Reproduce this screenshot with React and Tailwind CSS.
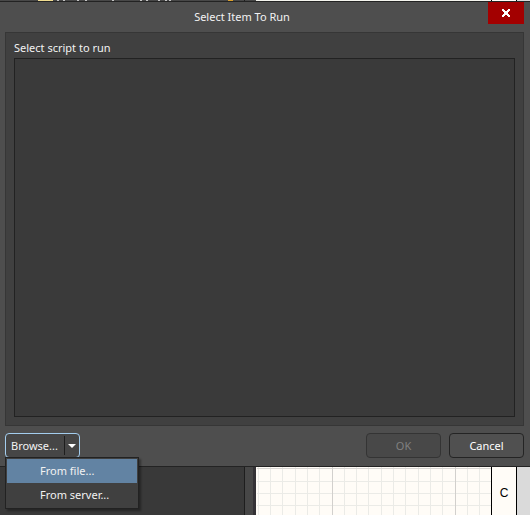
import { useState } from "react";

const columns = [2, 14, 26, 39, 51, 63, 88, 100, 112, 125, 137, 149, 162, 174, 186, 211, 223];
const glyphEdges = [57, 63, 77, 85, 112, 140, 146, 158, 165, 169];

function EditorTop() {
  return (
    <div className="flex h-px shrink-0 bg-[#484848]" aria-hidden="true">
      <svg className="h-px w-[256px]" viewBox="0 0 256 1" shapeRendering="crispEdges">
        <rect x="38" y="0" width="15" height="1" fill="#f0dc90" />
        {glyphEdges.map((x) => (
          <rect key={x} x={x} y="0" width="2" height="1" fill="#c4c4c4" />
        ))}
        <rect x="228" y="0" width="5" height="1" fill="#dca02c" />
        <rect x="244" y="0" width="1" height="1" fill="#1e1e1e" />
      </svg>
      <div className="flex-1 bg-[#f4f4ee]" />
      <div className="w-[26px] border-x border-black bg-[#fffcf7]" />
      <div className="w-[13px] bg-[#dadada]" />
    </div>
  );
}

function EditorBottom() {
  return (
    <div className="flex h-12 shrink-0" aria-hidden="true">
      <div className="w-[244px] bg-[#393939]" />
      <div className="w-[9px] border-l border-[#1e1e1e] bg-[#474747]" />
      <div className="w-[3px] bg-[#343236]" />
      <div className="min-w-0 flex-1 overflow-hidden bg-[#fffcf7]">
        <svg className="h-12 w-[235px]" viewBox="0 0 235 48" shapeRendering="crispEdges">
          {[14, 26, 38].map((y) => (
            <rect key={y} x="1" y={y} width="234" height="1" fill="#ebebe7" />
          ))}
          {columns.map((x) => (
            <rect key={x} x={x} y="0" width="1" height="48" fill="#ebebe7" />
          ))}
          <rect x="1" y="1" width="234" height="1" fill="#d8d6d3" />
          <rect x="76" y="0" width="1" height="48" fill="#d2d0cd" />
          <rect x="199" y="0" width="1" height="48" fill="#d2d0cd" />
        </svg>
      </div>
      <div className="flex w-[26px] items-center justify-center border-x border-black bg-[#fffcf7] pt-1 font-['Liberation_Sans',Arial,sans-serif] text-xs text-black">
        C
      </div>
      <div className="w-[13px] bg-[#dadada]" />
    </div>
  );
}

function BrowseButton() {
  const [open, setOpen] = useState(true);
  return (
    <div className="relative">
      <div className="flex h-[25px] w-[75px] rounded border border-[#a3cdee] bg-[#464646]">
        <button type="button" className="flex-1 whitespace-nowrap pl-px text-left">
          <span className="px-1">Browse...</span>
        </button>
        <button
          type="button"
          aria-label="More browse options"
          aria-expanded={open}
          onClick={() => setOpen(!open)}
          className="my-0.5 flex w-[15px] items-center justify-center border-l border-[#1e1e1e]"
        >
          <svg className="h-1 w-2" viewBox="0 0 8 4">
            <path d="M0 0h8L4 4z" fill="#fff" />
          </svg>
        </button>
      </div>
      {open && (
        <div
          role="menu"
          className="absolute left-0 top-6 z-10 flex w-[134px] flex-col border border-[#222] bg-[#404040] p-px shadow-[2px_2px_2px_rgba(0,0,0,0.35)]"
        >
          <button type="button" role="menuitem" className="h-6 bg-[#6283a3] pl-[33px] text-left">
            From file...
          </button>
          <button type="button" role="menuitem" className="h-6 pl-[33px] text-left">
            From server...
          </button>
        </div>
      )}
    </div>
  );
}

export default function App() {
  return (
    <div className="flex h-screen flex-col overflow-hidden font-['Noto_Sans','Open_Sans',sans-serif] text-[11px] leading-4 text-[#f2f2f2]">
      <EditorTop />
      <section
        role="dialog"
        aria-labelledby="dialog-title"
        className="flex min-h-0 flex-1 flex-col border-y border-[#232323] bg-[#4e4e4e]"
      >
        <header className="flex h-[30px] shrink-0 items-start pr-1.5">
          <h1 id="dialog-title" className="flex-1 pr-1 pt-[7px] text-center">
            Select Item To Run
          </h1>
          <button
            type="button"
            aria-label="Close"
            className="flex h-[22px] w-9 items-center justify-center bg-[#a30000]"
          >
            <svg className="h-2 w-2" viewBox="0 0 8 8" shapeRendering="crispEdges">
              <path
                d="M0 0h2v1h1v1h2v-1h1v-1h2v2h-1v1h-1v2h1v1h1v2h-2v-1h-1v-1h-2v1h-1v1h-2v-2h1v-1h1v-2h-1v-1h-1z"
                fill="#fff"
              />
              <path d="M2 1h1v1h-1zM5 1h1v1h-1zM2 6h1v1h-1zM5 6h1v1h-1z" fill="#fff" />
            </svg>
          </button>
        </header>
        <main className="mx-[5px] mr-1.5 flex min-h-0 flex-1 flex-col border border-[#363636] bg-[#404040] px-2 pb-2 pt-[7px]">
          <h2 id="list-label" className="mb-0.5 h-4 shrink-0">
            Select script to run
          </h2>
          <div
            role="listbox"
            aria-labelledby="list-label"
            className="flex-1 border border-[#222] bg-[#3a3a3a]"
          />
        </main>
        <footer className="flex h-10 shrink-0 items-start gap-2 pl-[5px] pr-1.5 pt-[7px]">
          <BrowseButton />
          <button
            type="button"
            disabled
            className="ml-auto h-[25px] w-[75px] rounded border border-[#343434] bg-[#484848] text-[#808080]"
          >
            OK
          </button>
          <button
            type="button"
            className="h-[25px] w-[75px] rounded border border-[#242424] bg-[#505050] text-white"
          >
            Cancel
          </button>
        </footer>
      </section>
      <EditorBottom />
    </div>
  );
}
